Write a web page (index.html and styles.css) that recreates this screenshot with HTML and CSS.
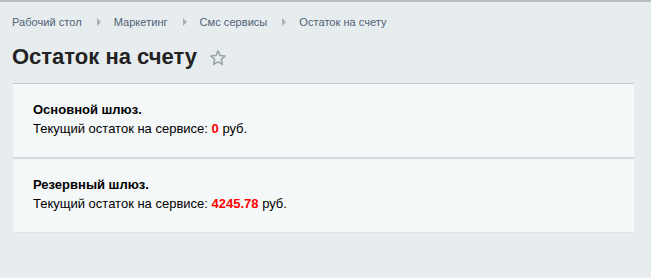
FILE: index.html
```html
<!DOCTYPE html>
<html lang="ru">
<head>
<meta charset="utf-8">
<link rel="stylesheet" href="styles.css">
</head>
<body>
<div class="topline"></div>
<nav class="crumbs">
  <a class="crumb">Рабочий стол</a><span class="sep"></span>
  <a class="crumb">Маркетинг</a><span class="sep"></span>
  <a class="crumb">Смс сервисы</a><span class="sep"></span>
  <a class="crumb">Остаток на счету</a>
</nav>
<h1 class="title">Остаток на счету
  <svg class="star" width="18" height="18" viewBox="0 0 24 24"><path d="M12 2.5l2.8 6.3 6.8.6-5.2 4.5 1.6 6.7L12 17.1l-6 3.5 1.6-6.7-5.2-4.5 6.8-.6z" fill="none" stroke="#9aa3ab" stroke-width="2" stroke-linejoin="round"/></svg>
</h1>
<div class="panel">
  <div class="block">
    <div class="name">Основной шлюз.</div>
    <div class="line">Текущий остаток на сервисе: <b class="sum">0</b> руб.</div>
  </div>
  <div class="block">
    <div class="name">Резервный шлюз.</div>
    <div class="line">Текущий остаток на сервисе: <b class="sum">4245.78</b> руб.</div>
  </div>
</div>
</body>
</html>
```
FILE: styles.css
```css
html, body { margin: 0; padding: 0; }
body {
  background: #e7edef;
  font-family: "Liberation Sans", Arial, sans-serif;
  width: 651px;
  height: 278px;
  overflow: hidden;
}
.topline { height: 2px; background: #b8bfc3; }
.crumbs {
  display: flex;
  align-items: center;
  padding: 12px 0 0 12px;
  height: 15px;
  font-size: 11.1px;
  color: #535c69;
}
.crumb { color: #4f5f75; }
.sep {
  width: 0; height: 0;
  border-left: 4px solid #a9b1b7;
  border-top: 4px solid transparent;
  border-bottom: 4px solid transparent;
  margin: 0 13px 0 15px;
}
.title {
  margin: 0;
  padding: 13px 0 0 12px;
  font-size: 22px;
  line-height: 30px;
  font-weight: bold;
  color: #222;
  display: flex;
  align-items: center;
  gap: 12px;
}
.star { margin-top: 1px; }
.panel {
  margin: 11px 0 0 13px;
  width: 621px;
  border-top: 1px solid #c4cacd;
  border-bottom: 1px solid #dde3e6;
  background: #f5f8f9;
}
.block {
  padding: 16px 20px 20px 20px;
  height: 37px;
}
.block + .block { border-top: 2px solid #d3d9dc; }
.name {
  font-size: 13px;
  font-weight: bold;
  color: #000;
  line-height: 19px;
}
.line {
  font-size: 13px;
  color: #000;
  line-height: 19px;
}
.sum { color: #f00; }
```
